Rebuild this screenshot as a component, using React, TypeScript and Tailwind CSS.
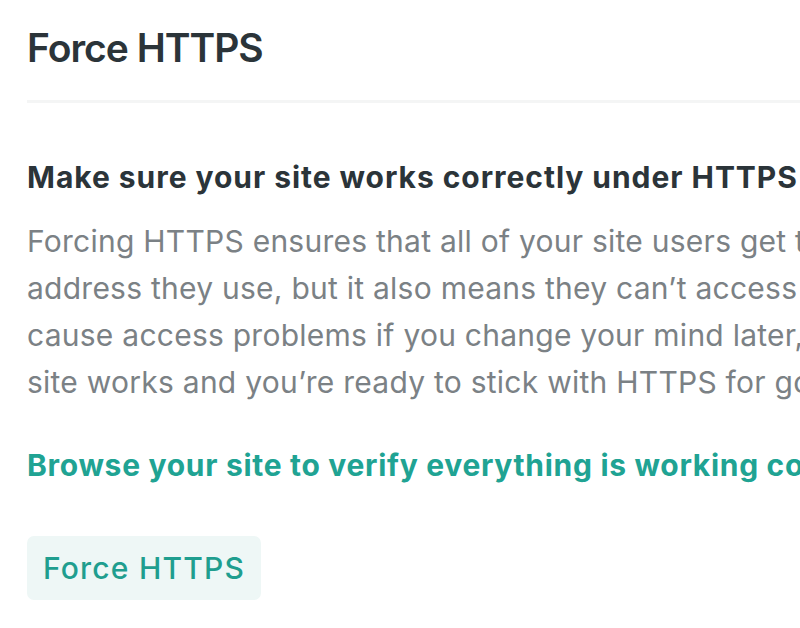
import React from "react";

export default function App() {
  return (
    <div className="w-[800px] h-[628px] overflow-hidden bg-white pl-[27px] pt-[24px] font-['Inter',sans-serif]">
      <h1 className="whitespace-nowrap text-[39px] leading-[48px] font-semibold text-[#2b3439] tracking-[-1px]">
        Force HTTPS
      </h1>
      <div className="mt-[28px] h-[3px] bg-[#f4f5f5]" />
      <div className="mt-[56px] whitespace-nowrap text-[30px] leading-[36px] font-bold text-[#2b3439] tracking-[0.95px]">
        Make sure your site works correctly under HTTPS
      </div>
      <div className="mt-[23px] whitespace-nowrap text-[30px] leading-[47px] text-[#7b8185] tracking-[0.25px]">
        <div>Forcing HTTPS ensures that all of your site users get the same</div>
        <div>address they use, but it also means they can’t access it over HTTP. This can</div>
        <div>cause access problems if you change your mind later, so make sure your</div>
        <div>site works and you’re ready to stick with HTTPS for good.</div>
      </div>
      <div className="mt-[41px] whitespace-nowrap text-[30px] leading-[36px] font-bold text-[#20a393] tracking-[0.7px]">
        Browse your site to verify everything is working correctly
      </div>
      <button className="mt-[53px] h-[64px] rounded-[7px] bg-[#eef7f6] px-[16px] text-[30px] leading-[36px] font-medium text-[#1f9e8f] tracking-[1.2px]">
        Force HTTPS
      </button>
    </div>
  );
}
